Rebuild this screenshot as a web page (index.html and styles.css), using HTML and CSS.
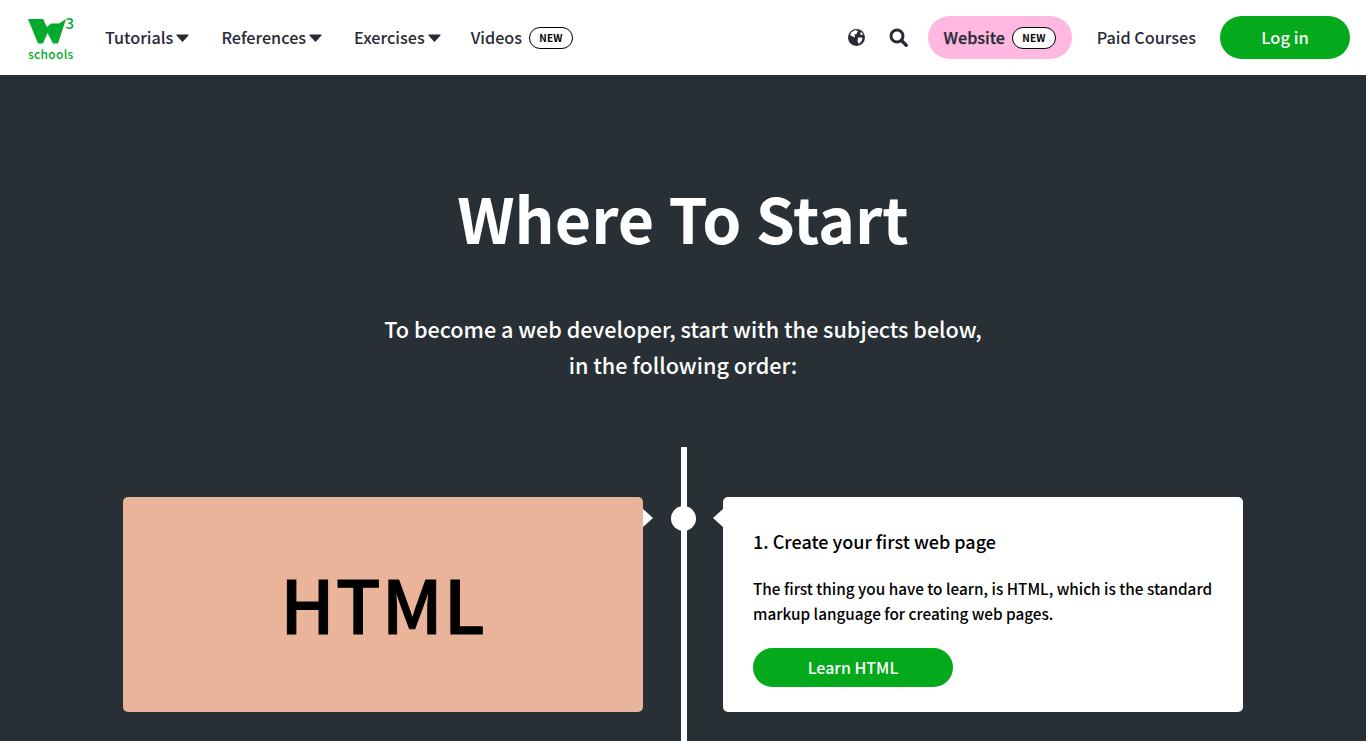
FILE: index.html
```html
<!DOCTYPE html>
<html lang="en">
<head>
<meta charset="utf-8">
<title>Where To Start</title>
<link rel="stylesheet" href="styles.css">
</head>
<body>
<header class="topbar">
  <a class="logo" href="#">
    <svg class="logo-w" width="38" height="25" viewBox="0 0 38 25"><path d="M0 0H15L19 8L23 4.5H31L38 0L30 24.5H25L19.5 14L15 24.5H10Z" fill="#04aa2b"/></svg>
    <span class="logo-three">3</span>
    <span class="logo-name">schools</span>
  </a>
  <nav class="nav-left">
    <a class="nav-item" href="#">Tutorials<svg class="caret" width="13" height="8" viewBox="0 0 13 8"><path d="M1 1H12L6.5 7.2Z" fill="#282a35" stroke="#282a35" stroke-width="1.2" stroke-linejoin="round"/></svg></a>
    <a class="nav-item" href="#">References<svg class="caret" width="13" height="8" viewBox="0 0 13 8"><path d="M1 1H12L6.5 7.2Z" fill="#282a35" stroke="#282a35" stroke-width="1.2" stroke-linejoin="round"/></svg></a>
    <a class="nav-item" href="#">Exercises<svg class="caret" width="13" height="8" viewBox="0 0 13 8"><path d="M1 1H12L6.5 7.2Z" fill="#282a35" stroke="#282a35" stroke-width="1.2" stroke-linejoin="round"/></svg></a>
    <a class="nav-item nav-videos" href="#">Videos<span class="badge">NEW</span></a>
  </nav>
  <nav class="nav-right">
    <a class="icon-link icon-globe" href="#" aria-label="Language">
      <svg width="17" height="17" viewBox="0 0 17 17"><circle cx="8.5" cy="8.5" r="8.5" fill="#282a35"/><path d="M3.5 3L7.5 1L10 2L8.5 5L6.5 5.5L7 8.5L4.5 7.5L2 6ZM10 8.5H14.5L14 11.5L11 15L9.5 12.5ZM12.5 2.5L15.5 5.5L12.5 6Z" fill="#fff"/></svg>
    </a>
    <a class="icon-link" href="#" aria-label="Search">
      <svg width="19" height="19" viewBox="0 0 19 19"><circle cx="8" cy="8" r="6" fill="none" stroke="#282a35" stroke-width="3"/><path d="M12.5 12.5L17.2 17.2" stroke="#282a35" stroke-width="3.4" stroke-linecap="round"/></svg>
    </a>
    <a class="pill-website" href="#">Website<span class="badge">NEW</span></a>
    <a class="nav-item paid" href="#">Paid Courses</a>
    <a class="btn-login" href="#">Log in</a>
  </nav>
</header>
<main class="hero">
  <h1>Where To Start</h1>
  <p class="intro">To become a web developer, start with the subjects below,<br>in the following order:</p>
  <section class="timeline">
    <div class="step">
      <div class="subject">HTML</div>
      <div class="marker">
        <i class="arrow arrow-left"></i>
        <i class="dot"></i>
        <i class="arrow arrow-right"></i>
      </div>
      <article class="card">
        <h3>1. Create your first web page</h3>
        <p>The first thing you have to learn, is HTML, which is the standard markup language for creating web pages.</p>
        <a class="btn-learn" href="#">Learn HTML</a>
      </article>
    </div>
  </section>
</main>
</body>
</html>
```

FILE: styles.css
```css
* { box-sizing: border-box; }
html, body { margin: 0; height: 741px; overflow: hidden; }
body {
  font-family: "Noto Sans CJK SC", "Liberation Sans", sans-serif;
  background: #283036;
  color: #000;
}
a { text-decoration: none; color: inherit; }

.topbar {
  height: 75px;
  background: #fff;
  display: flex;
  align-items: center;
  justify-content: space-between;
  padding: 0 16px 0 28px;
  color: #282a35;
}
.logo {
  position: relative;
  display: flex;
  flex-direction: column;
  width: 46px;
  height: 45px;
  color: #04aa2b;
  margin-top: 2px;
}
.logo-w { display: block; margin-top: 3px; }
.logo-three {
  position: absolute;
  top: -2px;
  right: 0;
  font-size: 15px;
  line-height: 18px;
  font-weight: 500;
}
.logo-name {
  position: absolute;
  left: 0;
  bottom: -1px;
  font-size: 12px;
  line-height: 16px;
  font-weight: 500;
  letter-spacing: .3px;
}
.nav-left { display: flex; align-items: center; gap: 32px; margin-left: 31px; margin-right: auto; }
.nav-right { display: flex; align-items: center; }
.nav-item {
  display: flex;
  align-items: center;
  padding-bottom: 2px;
  font-size: 16.2px;
  line-height: 24px;
  font-weight: 500;
}
.nav-videos { margin-left: -2px; }
.caret {
  display: block;
  margin: 2px 0 0 3px;
}
.badge {
  display: inline-block;
  width: 44px;
  height: 22px;
  margin: 2px 0 0 7px;
  border: 1px solid #000;
  border-radius: 11px;
  background: #fff;
  color: #000;
  font-size: 10px;
  line-height: 20px;
  font-weight: 700;
  letter-spacing: .2px;
  text-align: center;
}
.icon-link { display: flex; margin-right: 20px; }
.icon-globe { margin-right: 24px; }
.pill-website {
  display: flex;
  align-items: center;
  justify-content: center;
  width: 144px;
  height: 43px;
  padding-bottom: 2px;
  border-radius: 22px;
  background: #ffb8e0;
  font-size: 16.2px;
  font-weight: 500;
  -webkit-text-stroke: .25px currentColor;
}
.pill-website .badge { -webkit-text-stroke: 0; }
.paid { margin-left: 25px; }
.btn-login {
  width: 130px;
  height: 43px;
  margin-left: 24px;
  border-radius: 22px;
  background: #04aa1b;
  color: #fff;
  font-size: 16.5px;
  line-height: 43px;
  font-weight: 500;
  text-align: center;
}

.hero { display: flex; flex-direction: column; align-items: center; color: #fff; }
h1 {
  margin: 104px 0 0;
  font-size: 62.7px;
  line-height: 76px;
  font-weight: 700;
}
.intro {
  margin: 56px 0 0;
  font-size: 21.6px;
  line-height: 36px;
  font-weight: 500;
  text-align: center;
}
.timeline {
  width: 1120px;
  margin-top: 64px;
  padding-top: 50px;
  background: linear-gradient(#fff, #fff) 558px 0 / 6px 100% no-repeat;
  height: 294px;
}
.step { display: grid; grid-template-columns: 520px 80px 520px; grid-template-rows: 215px; }
.subject {
  display: flex;
  align-items: center;
  justify-content: center;
  padding-bottom: 6px;
  background: #e9b49a;
  border-radius: 5px;
  color: #000;
  font-size: 73.5px;
  font-weight: 500;
  letter-spacing: 1px;
  -webkit-text-stroke: 1px #000;
}
.marker {
  position: relative;
  display: flex;
  align-items: flex-start;
  justify-content: space-between;
  padding-top: 9px;
}
.dot {
  width: 25px;
  height: 25px;
  border-radius: 50%;
  background: #fff;
  margin: 0 0 0 1px;
}
.arrow {
  width: 0;
  height: 0;
  margin-top: 3px;
  border-top: 9px solid transparent;
  border-bottom: 9px solid transparent;
}
.arrow-left { border-left: 10px solid #fff; }
.arrow-right { border-right: 10px solid #fff; }
.card {
  background: #fff;
  border-radius: 5px;
  color: #000;
  padding: 29px 30px;
}
.card h3 { margin: 0; font-size: 18px; line-height: 30px; font-weight: 500; }
.card p { margin: 20px 0 0; font-size: 15.3px; line-height: 25px; font-weight: 500; }
.btn-learn {
  display: block;
  width: 200px;
  height: 39px;
  margin-top: 22px;
  border-radius: 20px;
  background: #04aa1b;
  color: #fff;
  font-size: 16px;
  line-height: 39px;
  font-weight: 500;
  text-align: center;
}
```
